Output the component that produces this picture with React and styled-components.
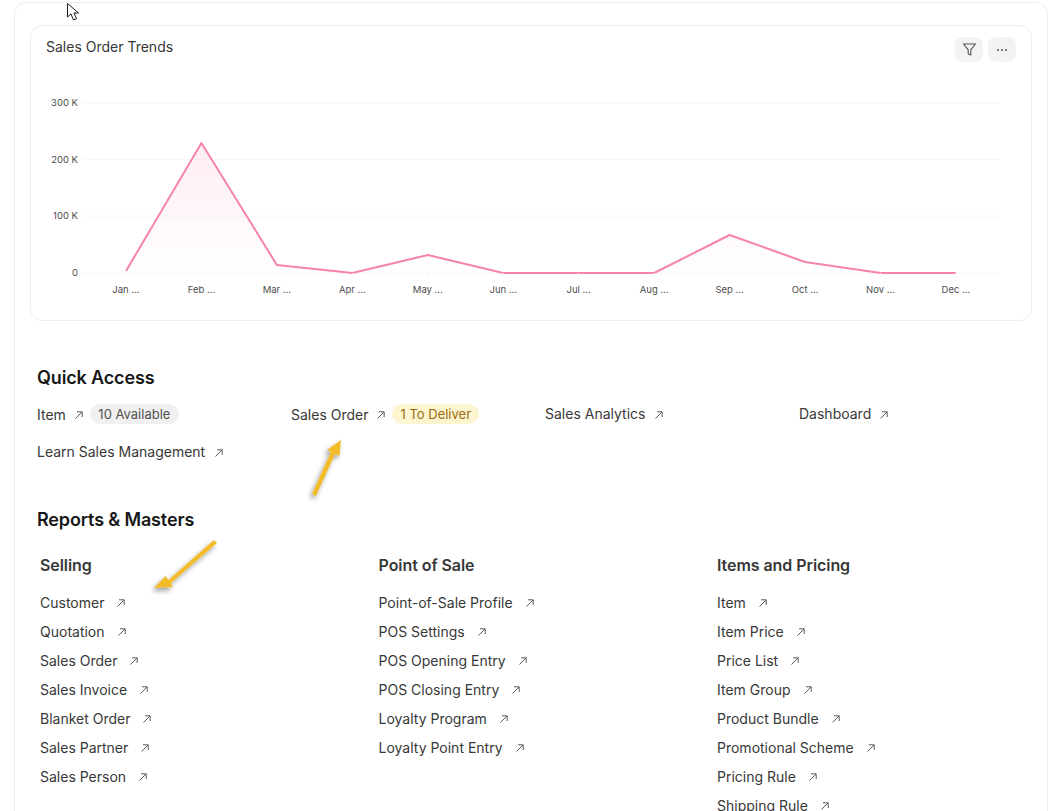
import React from 'react';
import styled, { createGlobalStyle } from 'styled-components';

const GlobalStyle = createGlobalStyle`
html, body {
  margin: 0;
  height: 811px;
  overflow: hidden;
  background: #fff;
}
body {
  font-family: Inter, "Liberation Sans", sans-serif;
  color: #383838;
}
`;

const Page = styled.div`
position: relative;
height: 811px;
overflow: hidden;
padding: 2px 10px 0 14px;
`;

const Frame = styled.div`
height: 900px;
border: 1px solid #ededed;
border-radius: 12px;
padding: 22px 15px 0;
`;

const ChartCard = styled.section`
position: relative;
height: 294px;
border: 1px solid #ededed;
border-radius: 12px;
`;

const ChartTitle = styled.h2`
position: absolute;
top: 13px;
left: 15px;
margin: 0;
font-size: 14px;
line-height: 16px;
font-weight: 400;
color: #383838;
`;

const ChartActions = styled.div`
position: absolute;
top: 11px;
right: 15px;
display: flex;
gap: 5px;
`;

const ChartButton = styled.button`
width: 28px;
height: 25px;
padding: 0;
border: none;
border-radius: 8px;
background: #f3f3f3;
color: #525252;
display: flex;
align-items: center;
justify-content: center;
`;

const ChartSvg = styled.svg`
display: block;
`;

const Heading = styled.h3`
margin: 0;
padding-left: 7px;
font-size: 18px;
line-height: 22px;
font-weight: 600;
letter-spacing: -0.008em;
color: #171717;
`;

const QuickSection = styled.section`
margin-top: 46px;
`;

const QuickGrid = styled.div`
display: grid;
grid-template-columns: repeat(4, 254px);
grid-auto-rows: 38px;
margin: 15px 0 0 7px;
`;

const QuickItem = styled.div`
display: flex;
align-items: flex-start;
height: 20px;
font-size: 14px;
line-height: 20px;
color: #383838;
`;

const QuickLabel = styled.span`
position: relative;
top: ${props => props.$hasPill ? '1px' : '0'};
`;

const Pill = styled.span`
height: 20px;
margin-left: 6px;
padding: 0 ${props => props.$tone === 'yellow' ? '8px' : '8.5px'};
border-radius: 10px;
font-size: 13px;
line-height: 20px;
background: ${props => props.$tone === 'yellow' ? '#fdf5cf' : '#f0f0f0'};
color: ${props => props.$tone === 'yellow' ? '#9a6b12' : '#525252'};
`;

const ReportsSection = styled.section`
margin-top: 29px;
`;

const ReportsGrid = styled.div`
display: grid;
grid-template-columns: repeat(3, 338.5px);
margin: 23px 0 0 10px;
`;

const Column = styled.div`
display: flex;
flex-direction: column;
`;

const ColumnTitle = styled.h4`
margin: 0 0 12px;
font-size: 16px;
line-height: 22px;
font-weight: 600;
letter-spacing: -0.004em;
color: #383838;
`;

const LinkRow = styled.div`
display: flex;
align-items: center;
height: 29px;
font-size: 14px;
color: #383838;
`;

const ArrowMark = styled.svg`
flex: none;
margin-left: ${props => props.$gap}px;
margin-top: ${props => props.$top || 0}px;
color: #5a5a5a;
`;

const Overlay = styled.svg`
position: absolute;
top: 0;
left: 0;
pointer-events: none;
`;

const months = ['Jan ...', 'Feb ...', 'Mar ...', 'Apr ...', 'May ...', 'Jun ...', 'Jul ...', 'Aug ...', 'Sep ...', 'Oct ...', 'Nov ...', 'Dec ...'];
const values = [2, 130, 8, 0, 18, 0, 0, 0, 38, 11, 0, 0];

// chart coordinates are relative to the card's inner box
const xAt = i => 95 + i * 75.45;
const yAt = v => 247 - v;
const points = values.map((v, i) => `${xAt(i)},${yAt(v)}`).join(' ');

const Chart = () => (
  <ChartSvg width="999" height="292" viewBox="0 0 999 292">
    <defs>
      <linearGradient id="area" x1="0" y1="0" x2="0" y2="1">
        <stop offset="0" stopColor="#f683ae" stopOpacity="0.14" />
        <stop offset="1" stopColor="#f683ae" stopOpacity="0" />
      </linearGradient>
    </defs>
    {[
      ['300 K', 77],
      ['200 K', 133.5],
      ['100 K', 190],
      ['0', 247],
    ].map(([label, y]) => (
      <g key={label}>
        <line x1="52" x2="969" y1={y} y2={y} stroke="#f6f6f6" />
        <text x="47" y={y + 3} textAnchor="end" fontSize="9.5" fill="#4c4c4c" fontFamily="Inter, sans-serif">{label}</text>
      </g>
    ))}
    <polygon points={`${xAt(0)},247 ${points} ${xAt(11)},247`} fill="url(#area)" />
    <polyline points={points} fill="none" stroke="#f683ae" strokeWidth="2" strokeLinejoin="round" />
    {months.map((m, i) => (
      <g key={m}>
        <line x1={xAt(i)} x2={xAt(i)} y1="247" y2="252" stroke="#f6f6f6" />
        <text x={xAt(i)} y="267" textAnchor="middle" fontSize="9.5" fill="#4c4c4c" fontFamily="Inter, sans-serif">{m}</text>
      </g>
    ))}
  </ChartSvg>
);

const Arrow = ({ gap, top }) => (
  <ArrowMark $gap={gap} $top={top} width="10" height="10" viewBox="0 0 10 10" fill="none" stroke="currentColor" strokeWidth="1">
    <path d="M1.5 8.5 L8 2 M3 1.8 H8.2 V7" />
  </ArrowMark>
);

const quickLinks = [
  { label: 'Item', pill: '10 Available', gap: 8 },
  { label: 'Sales Order', pill: '1 To Deliver', tone: 'yellow', gap: 8 },
  { label: 'Sales Analytics', gap: 9 },
  { label: 'Dashboard', gap: 8 },
  { label: 'Learn Sales Management', gap: 9 },
];

const columns = [
  {
    title: 'Selling',
    links: ['Customer', 'Quotation', 'Sales Order', 'Sales Invoice', 'Blanket Order', 'Sales Partner', 'Sales Person'],
  },
  {
    title: 'Point of Sale',
    links: ['Point-of-Sale Profile', 'POS Settings', 'POS Opening Entry', 'POS Closing Entry', 'Loyalty Program', 'Loyalty Point Entry'],
  },
  {
    title: 'Items and Pricing',
    links: ['Item', 'Item Price', 'Price List', 'Item Group', 'Product Bundle', 'Promotional Scheme', 'Pricing Rule', 'Shipping Rule'],
  },
];

const Annotations = () => (
  <Overlay width="1058" height="811" viewBox="0 0 1058 811">
    <defs>
      <filter id="soft" x="-40%" y="-40%" width="180%" height="180%">
        <feDropShadow dx="-2" dy="3" stdDeviation="2.5" floodColor="#000" floodOpacity="0.4" />
      </filter>
    </defs>
    <g filter="url(#soft)" fill="#f2bb2c">
      <polygon points="341,440 339.5,456 335,454 316,496 312,494 331,452 327,450" />
      <polygon points="154,588 165.5,576 168.5,580 214,540 217,543 171,583 173,587" />
    </g>
    <path d="M67.5 3.5 V17 L71 14 L73.5 20 L76.5 18.7 L74 13 H78.5 Z" fill="#fff" stroke="#1a1a1a" strokeWidth="1" />
  </Overlay>
);

const App = () => (
  <Page>
    <GlobalStyle />
    <Frame>
      <ChartCard>
        <ChartTitle>Sales Order Trends</ChartTitle>
        <ChartActions>
          <ChartButton>
            <svg width="15" height="15" viewBox="0 0 15 15" fill="none" stroke="currentColor" strokeWidth="1.1" strokeLinejoin="round">
              <path d="M1.5 2 H13.5 L8.8 7.8 V13 L6.2 11.8 V7.8 Z" />
            </svg>
          </ChartButton>
          <ChartButton>
            <svg width="12" height="4" viewBox="0 0 12 4" fill="currentColor">
              <circle cx="2" cy="2" r="1" />
              <circle cx="6" cy="2" r="1" />
              <circle cx="10" cy="2" r="1" />
            </svg>
          </ChartButton>
        </ChartActions>
        <Chart />
      </ChartCard>

      <QuickSection>
        <Heading>Quick Access</Heading>
        <QuickGrid>
          {quickLinks.map(link => (
            <QuickItem key={link.label}>
              <QuickLabel $hasPill={!!link.pill}>{link.label}</QuickLabel>
              <Arrow gap={link.gap} top={6} />
              {link.pill ? <Pill $tone={link.tone}>{link.pill}</Pill> : null}
            </QuickItem>
          ))}
        </QuickGrid>
      </QuickSection>

      <ReportsSection>
        <Heading>Reports &amp; Masters</Heading>
        <ReportsGrid>
          {columns.map(col => (
            <Column key={col.title}>
              <ColumnTitle>{col.title}</ColumnTitle>
              {col.links.map(label => (
                <LinkRow key={label}>
                  {label}
                  <Arrow gap={12} />
                </LinkRow>
              ))}
            </Column>
          ))}
        </ReportsGrid>
      </ReportsSection>
    </Frame>
    <Annotations />
  </Page>
);

export default App;
